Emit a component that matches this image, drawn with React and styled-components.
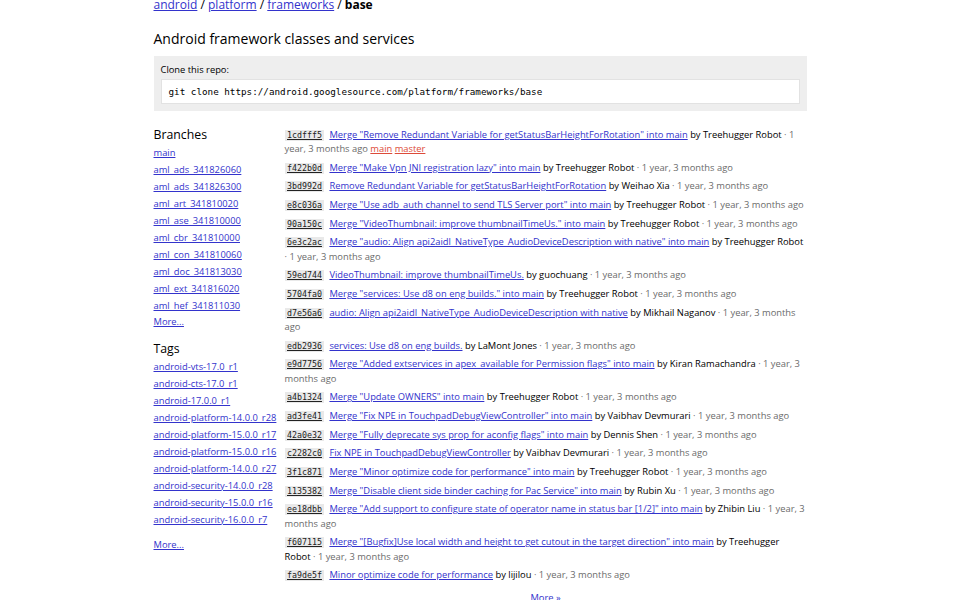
import React from "react";
import styled, { createGlobalStyle } from "styled-components";

const GlobalStyle = createGlobalStyle`
  html, body {
    margin: 0;
    padding: 0;
    background: #fff;
    color: #000;
    font-family: "Open Sans", "Liberation Sans", sans-serif;
    font-size: 9.36px;
    line-height: 14.4px;
    overflow: hidden;
  }
  a { color: #3333cc; text-decoration: underline; }
`;

const Container = styled.div`
  width: 653px;
  margin: 0 auto;
`;

const Breadcrumbs = styled.div`
  font-size: 12px;
  line-height: 18px;
  margin-top: -4px;
  margin-bottom: 15px;
`;

const Crumb = styled.a``;
const CrumbCurrent = styled.b`font-weight: 700;`;

const Description = styled.h2`
  font-size: 14px;
  font-weight: 400;
  line-height: 20px;
  margin: 0 0 7px;
`;

const CloneBox = styled.div`
  background: #eeeeee;
  padding: 7px 7px 7px;
`;

const CloneTitle = styled.div`
  margin-bottom: 2px;
`;

const CloneCommand = styled.div`
  box-sizing: border-box;
  height: 25px;
  background: #fff;
  border: 1px solid #e2e2e2;
  padding: 1px 7px 0;
  display: flex;
  align-items: center;
  font-family: "DejaVu Sans Mono", "Liberation Mono", monospace;
  font-size: 9.27px;
  color: #000;
`;

const Shortlog = styled.div`
  display: grid;
  grid-template-columns: 131px 1fr;
  margin-top: 14px;
`;

const Refs = styled.div`
  padding-top: 1px;
`;

const RefTitle = styled.h3`
  font-size: 12.3px;
  font-weight: 400;
  line-height: 18px;
  margin: ${(p) => (p.$first ? "0" : "10.5px")} 0 0;
`;

const RefList = styled.ul`
  list-style: none;
  margin: 0;
  padding: 0;
`;

const RefItem = styled.li`
  padding: 1.3px 0;
  white-space: nowrap;
  &:first-child { padding-top: 1.8px; }
`;

const RefMore = styled.div`
  margin-top: ${(p) => (p.$spaced ? "9.5px" : "0")};
`;

const Log = styled.div``;

const CommitList = styled.ol`
  list-style: none;
  margin: 0;
  padding: 0;
`;

const CommitItem = styled.li`
  padding: 2.13px 0;
`;

const Sha = styled.a`
  display: inline-block;
  background: #e9e9e9;
  color: #222;
  font-family: "DejaVu Sans Mono", "Liberation Mono", monospace;
  font-size: 8.3px;
  line-height: 9px;
  padding: 1px 2.5px;
  margin-right: 2.5px;
`;

const Author = styled.span`
  color: #000;
`;

const Time = styled.span`
  color: #6b6b6b;
`;

const Label = styled.a`
  color: #dd4b39;
`;

const LogMore = styled.div`
  text-align: center;
  margin-top: 6px;
`;

const branches = [
  "main",
  "aml_ads_341826060",
  "aml_ads_341826300",
  "aml_art_341810020",
  "aml_ase_341810000",
  "aml_cbr_341810000",
  "aml_con_341810060",
  "aml_doc_341813030",
  "aml_ext_341816020",
  "aml_hef_341811030",
];

const tags = [
  "android-vts-17.0_r1",
  "android-cts-17.0_r1",
  "android-17.0.0_r1",
  "android-platform-14.0.0_r28",
  "android-platform-15.0.0_r17",
  "android-platform-15.0.0_r16",
  "android-platform-14.0.0_r27",
  "android-security-14.0.0_r28",
  "android-security-15.0.0_r16",
  "android-security-16.0.0_r7",
];

const commits = [
  ["1cdfff5", 'Merge "Remove Redundant Variable for getStatusBarHeightForRotation" into main', "Treehugger Robot", ["main", "master"]],
  ["f422b0d", 'Merge "Make Vpn JNI registration lazy" into main', "Treehugger Robot"],
  ["3bd992d", "Remove Redundant Variable for getStatusBarHeightForRotation", "Weihao Xia"],
  ["e8c036a", 'Merge "Use adb_auth channel to send TLS Server port" into main', "Treehugger Robot"],
  ["90a150c", 'Merge "VideoThumbnail: improve thumbnailTimeUs." into main', "Treehugger Robot"],
  ["6e3c2ac", 'Merge "audio: Align api2aidl_NativeType_AudioDeviceDescription with native" into main', "Treehugger Robot"],
  ["59ed744", "VideoThumbnail: improve thumbnailTimeUs.", "guochuang"],
  ["5704fa0", 'Merge "services: Use d8 on eng builds." into main', "Treehugger Robot"],
  ["d7e56a6", "audio: Align api2aidl_NativeType_AudioDeviceDescription with native", "Mikhail Naganov"],
  ["edb2936", "services: Use d8 on eng builds.", "LaMont Jones"],
  ["e9d7756", 'Merge "Added extservices in apex_available for Permission flags" into main', "Kiran Ramachandra"],
  ["a4b1324", 'Merge "Update OWNERS" into main', "Treehugger Robot"],
  ["ad3fe41", 'Merge "Fix NPE in TouchpadDebugViewController" into main', "Vaibhav Devmurari"],
  ["42a0e32", 'Merge "Fully deprecate sys prop for aconfig flags" into main', "Dennis Shen"],
  ["c2282c0", "Fix NPE in TouchpadDebugViewController", "Vaibhav Devmurari"],
  ["3f1c871", 'Merge "Minor optimize code for performance" into main', "Treehugger Robot"],
  ["1135382", 'Merge "Disable client side binder caching for Pac Service" into main', "Rubin Xu"],
  ["ee18dbb", 'Merge "Add support to configure state of operator name in status bar [1/2]" into main', "Zhibin Liu"],
  ["f607115", 'Merge "[Bugfix]Use local width and height to get cutout in the target direction" into main', "Treehugger Robot"],
  ["fa9de5f", "Minor optimize code for performance", "lijilou"],
];

export default function App() {
  return (
    <>
      <GlobalStyle />
      <Container>
        <Breadcrumbs>
          <Crumb href="#">android</Crumb> / <Crumb href="#">platform</Crumb> /{" "}
          <Crumb href="#">frameworks</Crumb> / <CrumbCurrent>base</CrumbCurrent>
        </Breadcrumbs>
        <Description>Android framework classes and services</Description>
        <CloneBox>
          <CloneTitle>Clone this repo:</CloneTitle>
          <CloneCommand>git clone https://android.googlesource.com/platform/frameworks/base</CloneCommand>
        </CloneBox>
        <Shortlog>
          <Refs>
            <RefTitle $first>Branches</RefTitle>
            <RefList>
              {branches.map((b) => (
                <RefItem key={b}>
                  <a href="#">{b}</a>
                </RefItem>
              ))}
            </RefList>
            <RefMore>
              <a href="#">More...</a>
            </RefMore>
            <RefTitle>Tags</RefTitle>
            <RefList>
              {tags.map((t) => (
                <RefItem key={t}>
                  <a href="#">{t}</a>
                </RefItem>
              ))}
            </RefList>
            <RefMore $spaced>
              <a href="#">More...</a>
            </RefMore>
          </Refs>
          <Log>
            <CommitList>
              {commits.map(([sha, msg, author, labels]) => (
                <CommitItem key={sha}>
                  <Sha href="#">{sha}</Sha> <a href="#">{msg}</a> <Author>by {author}</Author>{" "}
                  <Time>· 1 year, 3 months ago</Time>
                  {labels &&
                    labels.map((l) => (
                      <React.Fragment key={l}>
                        {" "}
                        <Label href="#">{l}</Label>
                      </React.Fragment>
                    ))}
                </CommitItem>
              ))}
            </CommitList>
            <LogMore>
              <a href="#">More »</a>
            </LogMore>
          </Log>
        </Shortlog>
      </Container>
    </>
  );
}
